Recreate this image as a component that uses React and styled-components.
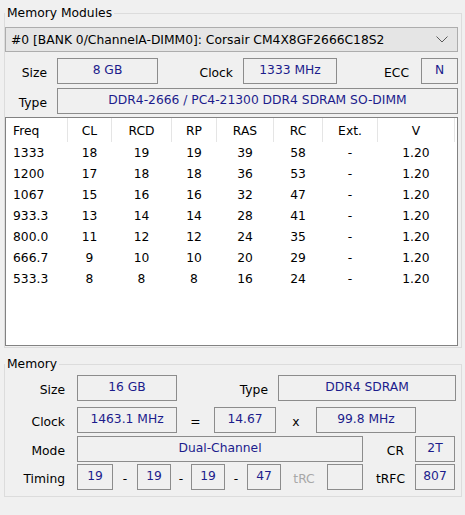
import React from 'react';
import styled, { createGlobalStyle } from 'styled-components';

const GlobalStyle = createGlobalStyle`
  html, body {
    margin: 0;
    padding: 0;
    background: #f0f0f0;
  }
  body {
    font-family: "DejaVu Sans", Tahoma, sans-serif;
    font-size: 12.3px;
    color: #000;
  }
`;

const spd = [
  ['1333', '18', '19', '19', '39', '58', '-', '1.20'],
  ['1200', '17', '18', '18', '36', '53', '-', '1.20'],
  ['1067', '15', '16', '16', '32', '47', '-', '1.20'],
  ['933.3', '13', '14', '14', '28', '41', '-', '1.20'],
  ['800.0', '11', '12', '12', '24', '35', '-', '1.20'],
  ['666.7', '9', '10', '10', '20', '29', '-', '1.20'],
  ['533.3', '8', '8', '8', '16', '24', '-', '1.20'],
];

const heads = ['Freq', 'CL', 'RCD', 'RP', 'RAS', 'RC', 'Ext.', 'V'];

const App = () => (
  <Page>
    <GlobalStyle />
    <Group $mt={0} $pt={6} $pb={1}>
      <Legend>Memory Modules</Legend>
      <Combo>
        <span>#0 [BANK 0/ChannelA-DIMM0]: Corsair CM4X8GF2666C18S2</span>
        <svg width="12" height="7" viewBox="0 0 12 7">
          <path d="M0.5 0.5 L6 6 L11.5 0.5" fill="none" stroke="#5a5a5a" strokeWidth="1" />
        </svg>
      </Combo>

      <Row $mt={6}>
        <Label $w={52}>Size</Label>
        <Field $w={101}>8 GB</Field>
        <Label $w={85}>Clock</Label>
        <Field $w={94}>1333 MHz</Field>
        <Label $w={84} $pr={12}>ECC</Label>
        <Field $w={37}>N</Field>
      </Row>
      <Row $mt={4}>
        <Label $w={52}>Type</Label>
        <Field $grow>DDR4-2666 / PC4-21300 DDR4 SDRAM SO-DIMM</Field>
      </Row>

      <ListBox>
        <SpdGrid>
          {heads.map((h, i) => (
            <Head key={h} $first={i === 0}>{h}</Head>
          ))}
          {spd.map((row) =>
            row.map((c, i) => (
              <Cell key={row[0] + i} $first={i === 0}>{c}</Cell>
            ))
          )}
        </SpdGrid>
      </ListBox>
    </Group>

    <Group $mt={8} $pt={3} $pb={6}>
      <Legend>Memory</Legend>
      <Row>
        <Label $w={72} $pr={12}>Size</Label>
        <Field $w={100}>16 GB</Field>
        <Label $w={101}>Type</Label>
        <Field $w={178}>DDR4 SDRAM</Field>
      </Row>
      <Row $mt={6}>
        <Label $w={72} $pr={12}>Clock</Label>
        <Field $w={100}>1463.1 MHz</Field>
        <Sym $w={37}>=</Sym>
        <Field $w={62}>14.67</Field>
        <Sym $w={40}>x</Sym>
        <Field $w={100}>99.8 MHz</Field>
      </Row>
      <Row $mt={3}>
        <Label $w={72} $pr={12}>Mode</Label>
        <Field $w={286}>Dual-Channel</Field>
        <Label $w={52} $pr={11}>CR</Label>
        <Field $w={40}>2T</Field>
      </Row>
      <Row $mt={2}>
        <Label $w={72} $pr={12}>Timing</Label>
        <Field $w={36}>19</Field>
        <Sym $w={24}>-</Sym>
        <Field $w={34}>19</Field>
        <Sym $w={20}>-</Sym>
        <Field $w={34}>19</Field>
        <Sym $w={22}>-</Sym>
        <Field $w={34}>47</Field>
        <Sym $w={46} $muted>tRC</Sym>
        <Field $w={36} />
        <Label $w={52} $pr={10}>tRFC</Label>
        <Field $w={40}>807</Field>
      </Row>
    </Group>
  </Page>
);

const Page = styled.div`
  width: 465px;
  height: 515px;
  box-sizing: border-box;
  padding: 5px 0 0 4px;
  background: #f0f0f0;
  overflow: hidden;
`;

const Group = styled.fieldset`
  width: 458px;
  min-width: 0;
  box-sizing: border-box;
  margin: ${(p) => p.$mt}px 0 0 0;
  padding: ${(p) => p.$pt}px 3px ${(p) => p.$pb}px 0;
  border: 1px solid #dcdcdc;
`;

const Legend = styled.legend`
  padding: 0 2px;
  line-height: 16px;
`;

const Combo = styled.div`
  height: 25px;
  box-sizing: border-box;
  display: flex;
  align-items: center;
  justify-content: space-between;
  padding: 1px 9px 0 5px;
  background: #e5e5e5;
  border: 1px solid #adadad;

  svg {
    margin-top: -2px;
  }
`;

const Row = styled.div`
  display: flex;
  align-items: stretch;
  height: 26px;
  margin-top: ${(p) => p.$mt || 0}px;
`;

const Label = styled.div`
  width: ${(p) => p.$w}px;
  flex: none;
  box-sizing: border-box;
  padding: 4px ${(p) => p.$pr ?? 10}px 0 0;
  display: flex;
  align-items: center;
  justify-content: flex-end;
  white-space: nowrap;
`;

const Sym = styled.div`
  width: ${(p) => p.$w}px;
  flex: none;
  padding-top: 3px;
  display: flex;
  align-items: center;
  justify-content: center;
  color: ${(p) => (p.$muted ? '#a8a8a8' : '#000')};
`;

const Field = styled.div`
  width: ${(p) => (p.$grow ? 'auto' : `${p.$w}px`)};
  flex: ${(p) => (p.$grow ? '1' : 'none')};
  box-sizing: border-box;
  border: 1px solid #8c8c8c;
  display: flex;
  align-items: center;
  justify-content: center;
  padding-bottom: 2px;
  color: #1c1c8c;
  white-space: nowrap;
`;

const ListBox = styled.div`
  margin-top: 3px;
  height: 229px;
  box-sizing: border-box;
  border: 1px solid #828282;
  background: #fff;
`;

const SpdGrid = styled.div`
  display: grid;
  grid-template-columns: 62px 44px 60px 45px 57px 49px 55px 77px;
  grid-template-rows: 24px;
  grid-auto-rows: 21px;
`;

const Head = styled.div`
  box-sizing: border-box;
  padding-top: 3px;
  line-height: 20px;
  border-right: 1px solid #e5e5e5;
  text-align: ${(p) => (p.$first ? 'left' : 'center')};
  padding-left: ${(p) => (p.$first ? 7 : 0)}px;
`;

const Cell = styled.div`
  line-height: 21px;
  padding-top: 1px;
  text-align: ${(p) => (p.$first ? 'left' : 'center')};
  padding-left: ${(p) => (p.$first ? 7 : 0)}px;
  padding-right: ${(p) => (p.$first ? 0 : 1)}px;
`;

export default App;
